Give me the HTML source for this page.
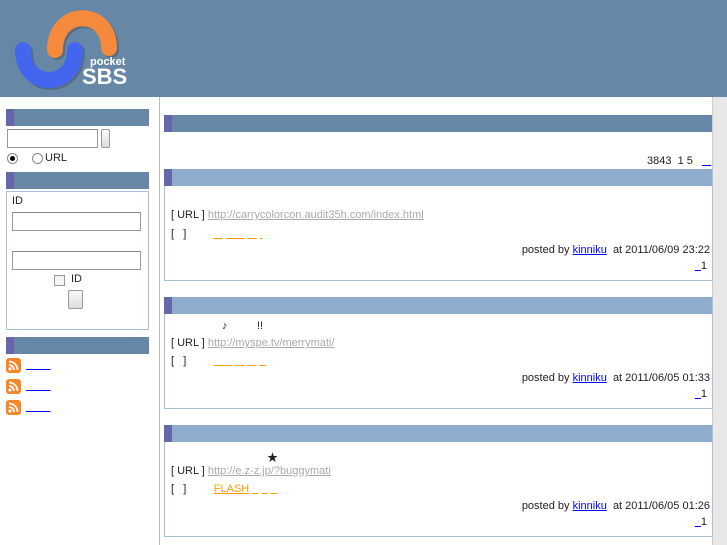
<!DOCTYPE html>
<html><head><meta charset="utf-8"><style>
*{margin:0;padding:0;box-sizing:border-box}
body{width:727px;height:545px;overflow:hidden;background:#fff;font-family:"Liberation Sans","Noto Sans CJK JP",sans-serif;font-size:11px;color:#222;position:relative}
.a{position:absolute;white-space:nowrap}
.hb{position:absolute;background:#6688a6;border-left:8px solid #6666aa}
.lb{position:absolute;background:#8eaccc;border-left:8px solid #6666aa}
.box{position:absolute;border:1px solid #a8c0dc}
.inp{position:absolute;border:1px solid #999;background:#fff;border-top-color:#888}
.btn{position:absolute;border:1px solid #999;border-radius:2px;background:linear-gradient(#fafafa,#ddd)}
.u{color:#aaa;text-decoration:underline}
.o{color:#f90;text-decoration:underline}
.b{color:#00f;text-decoration:underline}
.rss{position:absolute;width:15px;height:15px}
</style></head><body>
<div class="a" style="left:0;top:0;width:727px;height:97px;background:#6688a6"></div>
<svg class="a" style="left:0;top:0" width="140" height="97">
<path d="M55 50 C55 8 109 8 109 48" stroke="#333" stroke-opacity=".3" stroke-width="16" fill="none" stroke-linecap="round" transform="translate(2,2)"/>
<path d="M55 50 C55 8 109 8 109 48" stroke="#f58a3c" stroke-width="16" fill="none" stroke-linecap="round"/>
<path d="M23 50 C23 90 75 90 75 50" stroke="#333" stroke-opacity=".3" stroke-width="16" fill="none" stroke-linecap="round" transform="translate(2,2)"/>
<path d="M23 50 C23 90 75 90 75 50" stroke="#4466ee" stroke-width="16" fill="none" stroke-linecap="round"/>
<text x="90" y="65" font-family="Liberation Sans" font-weight="bold" font-size="11" fill="#fff">pocket</text>
<text x="82" y="84" font-family="Liberation Sans" font-weight="bold" font-size="22" fill="#fff">SBS</text>
</svg>
<div class="a" style="left:159px;top:97px;width:1px;height:448px;background:#bbb"></div>
<div class="a" style="left:712px;top:97px;width:15px;height:448px;background:#e8e8e8;border-left:1px solid #ccc"></div>

<div class="hb" style="left:6px;top:109px;width:143px;height:17px"></div>
<div class="inp" style="left:7px;top:129px;width:91px;height:19px"></div>
<div class="btn" style="left:101px;top:129px;width:9px;height:19px"></div>
<div class="a" style="left:7px;top:153px;width:11px;height:11px;border:1px solid #888;border-radius:50%;background:#fff"><div style="width:5px;height:5px;background:#000;border-radius:50%;margin:2px"></div></div>
<div class="a" style="left:32px;top:153px;width:11px;height:11px;border:1px solid #888;border-radius:50%;background:#fff"></div>
<div class="a" style="left:45px;top:152px">URL</div>
<div class="hb" style="left:6px;top:172px;width:143px;height:17px"></div>
<div class="box" style="left:6px;top:191px;width:143px;height:139px"></div>
<div class="a" style="left:12px;top:195px">ID</div>
<div class="inp" style="left:12px;top:212px;width:129px;height:19px"></div>
<div class="inp" style="left:12px;top:251px;width:129px;height:19px"></div>
<div class="a" style="left:54px;top:275px;width:11px;height:11px;border:1px solid #999;background:#f4f4f4"></div>
<div class="a" style="left:71px;top:273px">ID</div>
<div class="btn" style="left:68px;top:290px;width:15px;height:19px"></div>
<div class="hb" style="left:6px;top:337px;width:143px;height:17px"></div>
<svg class="rss" style="left:6px;top:358px" viewBox="0 0 15 15"><rect width="15" height="15" rx="3" fill="#f7862a"/><circle cx="4" cy="11" r="1.6" fill="#fff"/><path d="M3 7a5 5 0 0 1 5 5M3 3.5a8.5 8.5 0 0 1 8.5 8.5" stroke="#fff" stroke-width="1.8" fill="none"/></svg>
<div class="a b" style="left:26px;top:359px">&nbsp;&nbsp;&nbsp;&nbsp;&nbsp;&nbsp;&nbsp;&nbsp;</div>
<svg class="rss" style="left:6px;top:379px" viewBox="0 0 15 15"><rect width="15" height="15" rx="3" fill="#f7862a"/><circle cx="4" cy="11" r="1.6" fill="#fff"/><path d="M3 7a5 5 0 0 1 5 5M3 3.5a8.5 8.5 0 0 1 8.5 8.5" stroke="#fff" stroke-width="1.8" fill="none"/></svg>
<div class="a b" style="left:26px;top:380px">&nbsp;&nbsp;&nbsp;&nbsp;&nbsp;&nbsp;&nbsp;&nbsp;</div>
<svg class="rss" style="left:6px;top:400px" viewBox="0 0 15 15"><rect width="15" height="15" rx="3" fill="#f7862a"/><circle cx="4" cy="11" r="1.6" fill="#fff"/><path d="M3 7a5 5 0 0 1 5 5M3 3.5a8.5 8.5 0 0 1 8.5 8.5" stroke="#fff" stroke-width="1.8" fill="none"/></svg>
<div class="a b" style="left:26px;top:401px">&nbsp;&nbsp;&nbsp;&nbsp;&nbsp;&nbsp;&nbsp;&nbsp;</div>

<div class="hb" style="left:164px;top:115px;width:548px;height:17px"></div>
<div class="a" style="left:647px;top:155px">3843&nbsp;&nbsp;1 5</div>
<div class="a b" style="left:702px;top:155px">&nbsp;&nbsp;&nbsp;</div>

<div class="box" style="left:164px;top:169px;width:549px;height:112px"></div>
<div class="lb" style="left:164px;top:169px;width:548px;height:17px"></div>
<div class="a" style="left:171px;top:209px">[ URL ] <span class="u">http://carrycolorcon.audit35h.com/index.html</span></div>
<div class="a" style="left:171px;top:228px">[&nbsp;&nbsp;&nbsp;]&nbsp;&nbsp;&nbsp;&nbsp;&nbsp;&nbsp;&nbsp;&nbsp;&nbsp;<span class="o">&nbsp;&nbsp;&nbsp;</span> <span class="o">&nbsp;&nbsp;&nbsp;&nbsp;&nbsp;&nbsp;</span> <span class="o">&nbsp;&nbsp;&nbsp;</span> <span class="o">&nbsp;</span></div>
<div class="a" style="right:17px;top:244px">posted by <span class="b">kinniku</span>&nbsp; at 2011/06/09 23:22</div>
<div class="a" style="right:20px;top:260px"><span class="b">&nbsp;&nbsp;</span>1</div>

<div class="box" style="left:164px;top:297px;width:549px;height:112px"></div>
<div class="lb" style="left:164px;top:297px;width:548px;height:17px"></div>
<div class="a" style="left:222px;top:320px">♪</div><div class="a" style="left:257px;top:320px">!!</div>
<div class="a" style="left:171px;top:337px">[ URL ] <span class="u">http://myspe.tv/merrymati/</span></div>
<div class="a" style="left:171px;top:355px">[&nbsp;&nbsp;&nbsp;]&nbsp;&nbsp;&nbsp;&nbsp;&nbsp;&nbsp;&nbsp;&nbsp;&nbsp;<span class="o">&nbsp;&nbsp;&nbsp;&nbsp;&nbsp;&nbsp;</span> <span class="o">&nbsp;&nbsp;&nbsp;</span> <span class="o">&nbsp;&nbsp;&nbsp;</span> <span class="o">&nbsp;&nbsp;</span></div>
<div class="a" style="right:17px;top:372px">posted by <span class="b">kinniku</span>&nbsp; at 2011/06/05 01:33</div>
<div class="a" style="right:20px;top:388px"><span class="b">&nbsp;&nbsp;</span>1</div>

<div class="box" style="left:164px;top:425px;width:549px;height:112px"></div>
<div class="lb" style="left:164px;top:425px;width:548px;height:17px"></div>
<div class="a" style="left:267px;top:449px">★</div>
<div class="a" style="left:171px;top:465px">[ URL ] <span class="u">http://e.z-z.jp/?buggymati</span></div>
<div class="a" style="left:171px;top:483px">[&nbsp;&nbsp;&nbsp;]&nbsp;&nbsp;&nbsp;&nbsp;&nbsp;&nbsp;&nbsp;&nbsp;&nbsp;<span class="o">FLASH</span> <span class="o">&nbsp;&nbsp;</span> <span class="o">&nbsp;&nbsp;</span> <span class="o">&nbsp;&nbsp;</span></div>
<div class="a" style="right:17px;top:500px">posted by <span class="b">kinniku</span>&nbsp; at 2011/06/05 01:26</div>
<div class="a" style="right:20px;top:516px"><span class="b">&nbsp;&nbsp;</span>1</div>
</body></html>
